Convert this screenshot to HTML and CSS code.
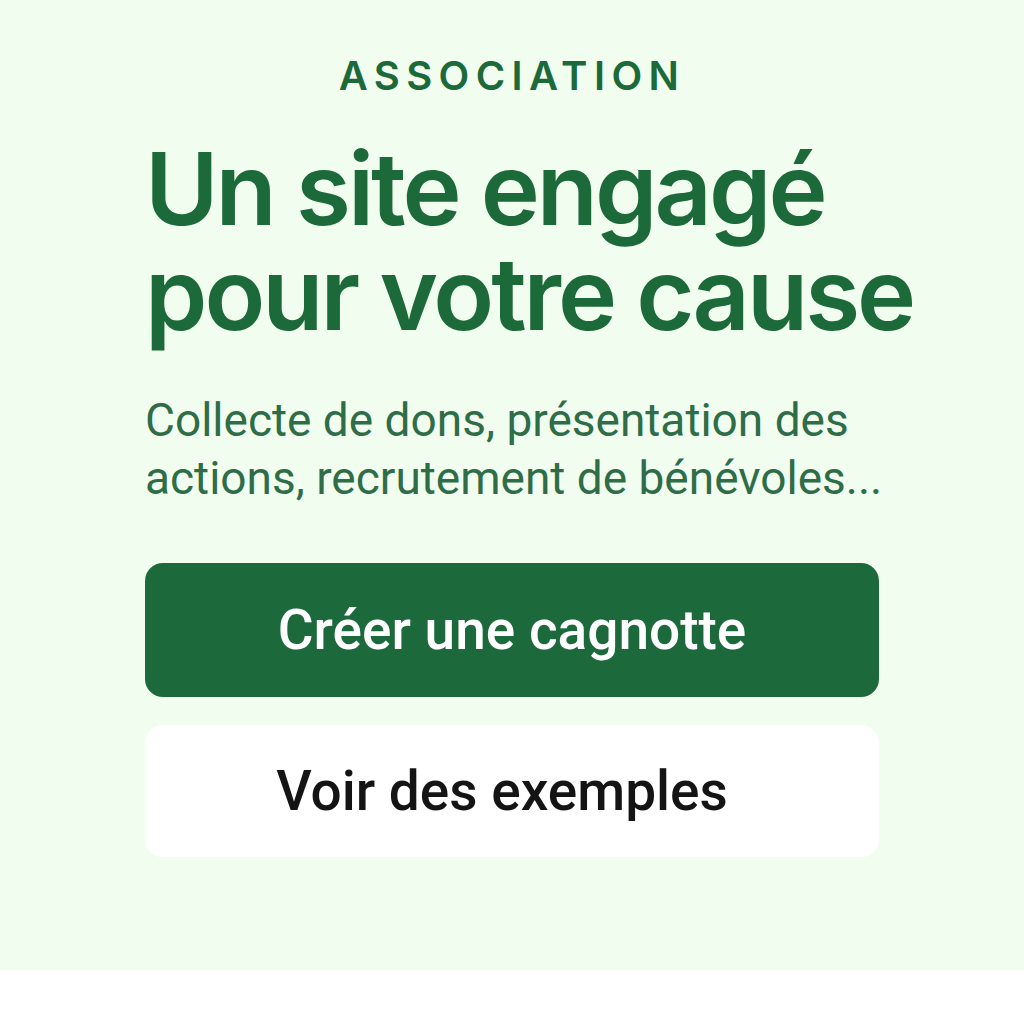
FILE: index.html
```html
<!DOCTYPE html>
<html lang="fr">
<head>
<meta charset="utf-8">
<title>Association</title>
<link rel="stylesheet" href="styles.css">
</head>
<body>
<section class="hero">
  <div class="content">
    <p class="eyebrow">ASSOCIATION</p>
    <h1 class="title">Un site engagé<br>pour votre cause</h1>
    <p class="lead">Collecte de dons, présentation des<br>actions, recrutement de bénévoles...</p>
    <div class="actions">
      <a class="btn btn-primary" href="#">Créer une cagnotte</a>
      <a class="btn btn-secondary" href="#">Voir des exemples</a>
    </div>
  </div>
</section>
</body>
</html>
```
FILE: styles.css
```css
html, body {
  margin: 0;
  padding: 0;
  background: #ffffff;
}
body {
  font-family: "Inter", "Roboto", sans-serif;
}
.hero {
  background: #f1fdee;
  height: 970px;
  box-sizing: border-box;
  padding-top: 56px;
}
.content {
  width: 734px;
  margin: 0 auto;
  display: flex;
  flex-direction: column;
}
.eyebrow {
  margin: 0;
  text-align: center;
  font-size: 40px;
  line-height: 40px;
  font-weight: 600;
  letter-spacing: 0.16em;
  color: #1c6a3a;
}
.title {
  margin: 40px 0 0;
  font-size: 100px;
  line-height: 105px;
  font-weight: 600;
  letter-spacing: -0.03em;
  white-space: nowrap;
  color: #1c6a3a;
}
.lead {
  margin: 45px 0 0;
  font-family: "Roboto", "Inter", sans-serif;
  font-size: 46px;
  line-height: 58px;
  font-weight: 400;
  white-space: nowrap;
  color: #2e6d47;
}
.actions {
  margin-top: 56px;
  display: flex;
  flex-direction: column;
  gap: 28px;
}
.btn {
  display: flex;
  align-items: center;
  justify-content: center;
  border-radius: 18px;
  text-decoration: none;
  font-family: "Roboto", "Inter", sans-serif;
  font-size: 55px;
  font-weight: 500;
}
.btn-primary {
  height: 134px;
  background: #1c6a3c;
  color: #ffffff;
}
.btn-secondary {
  height: 132px;
  box-sizing: border-box;
  padding-right: 20px;
  background: #ffffff;
  color: #141414;
}
```
